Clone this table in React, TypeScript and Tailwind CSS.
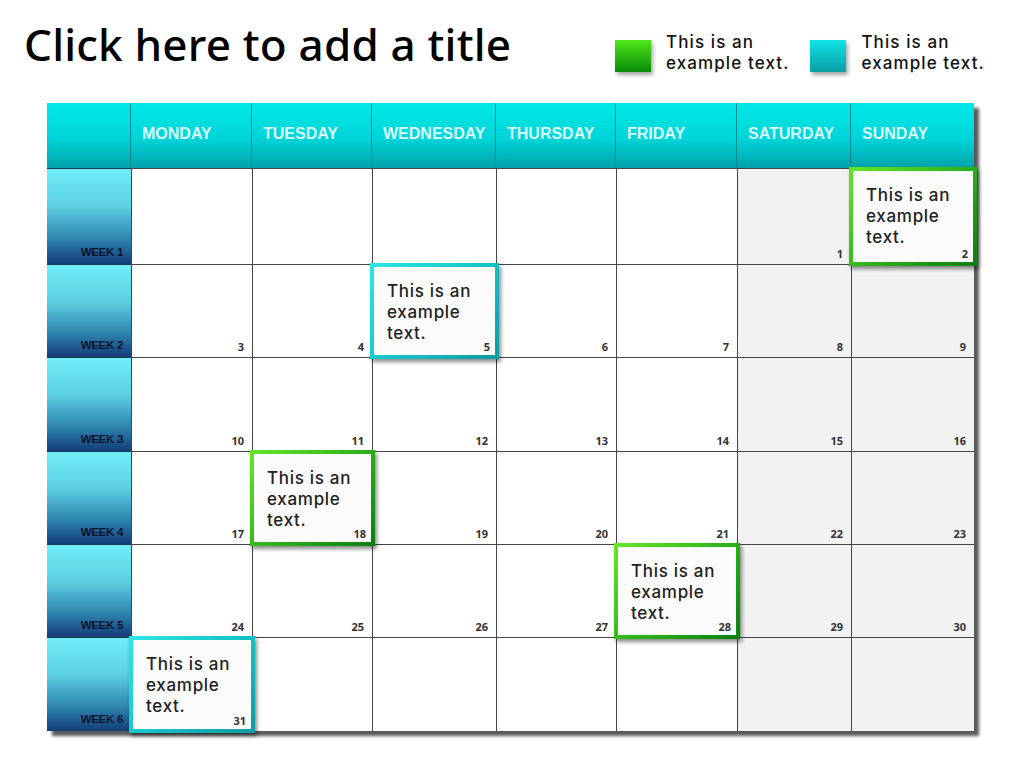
import React from "react";

const cols = [121, 120, 124, 120, 121, 114, 123];
const days = ["MONDAY", "TUESDAY", "WEDNESDAY", "THURSDAY", "FRIDAY", "SATURDAY", "SUNDAY"];
const rowH = [96, 93, 94, 93, 93, 94];

const weeks: (number | null)[][] = [
  [null, null, null, null, null, 1, 2],
  [3, 4, 5, 6, 7, 8, 9],
  [10, 11, 12, 13, 14, 15, 16],
  [17, 18, 19, 20, 21, 22, 23],
  [24, 25, 26, 27, 28, 29, 30],
  [31, null, null, null, null, null, null],
];

const highlights: Record<string, "green" | "cyan"> = {
  "0-6": "green",
  "1-2": "cyan",
  "3-1": "green",
  "4-4": "green",
  "5-0": "cyan",
};

function Highlight({ color, num }: { color: "green" | "cyan"; num: number | null }) {
  const grad =
    color === "green"
      ? "bg-[linear-gradient(135deg,#66e62a_0%,#2fb51a_50%,#0b7d10_100%)]"
      : "bg-[linear-gradient(135deg,#2ee6e6_0%,#17c4c8_50%,#0e9aa2_100%)]";
  return (
    <div
      className={`absolute -left-[3px] -right-[3px] -top-[2px] -bottom-[2px] z-10 p-[4px] shadow-[2px_3px_4px_rgba(0,0,0,0.45)] ${grad}`}
    >
      <div className="relative h-full w-full bg-[#fbfbfb]">
        <div
          className="absolute left-[13px] top-[14px] text-[17px] leading-[21px] font-medium text-[#222] tracking-[0.7px]"
          style={{ fontFamily: 'Inter, "Noto Sans", sans-serif' }}
        >
          This is an
          <br />
          example
          <br />
          text.
        </div>
        {num !== null && (
          <div className="absolute right-[5px] bottom-[1px] text-[11px] leading-[14px] font-bold text-[#333]">{num}</div>
        )}
      </div>
    </div>
  );
}

function Legend({ grad, gap }: { grad: string; gap: string }) {
  return (
    <div className="flex">
      <div className={`mt-[8px] ${gap} w-[36px] h-[32px] ${grad} shadow-[2px_3px_4px_rgba(0,0,0,0.35)]`} />
      <div
        className="ml-[15px] text-[17px] leading-[21px] font-medium text-[#111] tracking-[1.1px] whitespace-nowrap"
        style={{ fontFamily: 'Inter, "Noto Sans", sans-serif' }}
      >
        This is an
        <br />
        example text.
      </div>
    </div>
  );
}

export default function App() {
  return (
    <div
      className="w-[1024px] h-[768px] bg-white relative overflow-hidden"
      style={{ fontFamily: '"Noto Sans", "Open Sans", sans-serif' }}
    >
      {/* Header */}
      <div className="flex h-[103px]">
        <div className="pl-[24px] pt-[15px] text-[44px] leading-[58px] font-medium text-black tracking-[0.2px] w-[590px] whitespace-nowrap">
          Click here to add a title
        </div>
        <div className="flex pt-[32px]">
          <Legend grad="bg-[linear-gradient(180deg,#4ee81a,#0a8a0a)]" gap="ml-[25px]" />
          <Legend grad="bg-[linear-gradient(180deg,#10e4e8,#0a9ea6)]" gap="ml-[21px]" />
        </div>
      </div>

      {/* Calendar */}
      <div className="ml-[47px] w-[927px] shadow-[5px_5px_3px_rgba(60,60,60,0.85)]">
        <div
          className="grid"
          style={{ gridTemplateColumns: `84px ${cols.map((c) => c + "px").join(" ")}` }}
        >
          <div className="h-[65px] bg-[linear-gradient(180deg,#00e8e8_0%,#00d4d8_55%,#00a2aa_100%)] border-r border-[#0b8c92]" />
          {days.map((d, i) => (
            <div
              key={d}
              className={`h-[65px] bg-[linear-gradient(180deg,#00e8e8_0%,#00d4d8_55%,#00a2aa_100%)] ${
                i < 6 ? "border-r border-[#0b8c92]" : ""
              } pl-[11px] pt-[20px] text-[16px] leading-[22px] font-bold text-[#d9ffff] whitespace-nowrap`}
              style={{ fontFamily: '"Liberation Sans", Arial, sans-serif' }}
            >
              {d}
            </div>
          ))}

          {weeks.map((week, r) => (
            <React.Fragment key={r}>
              <div
                className="relative bg-[linear-gradient(180deg,#70eef8_0%,#5ccfe2_40%,#2c82ac_75%,#153c78_100%)] border-t border-[#1a3a5a]"
                style={{ height: rowH[r] }}
              >
                <div
                  className="absolute right-[8px] bottom-[3px] text-[11.5px] font-bold text-[#06122e] tracking-[-0.3px]"
                  style={{ fontFamily: '"Liberation Sans", Arial, sans-serif' }}
                >
                  WEEK {r + 1}
                </div>
              </div>
              {week.map((n, c) => {
                const hl = highlights[`${r}-${c}`];
                const weekend = c >= 5;
                return (
                  <div
                    key={c}
                    className={`relative border-t border-l border-[#444] ${weekend ? "bg-[#f2f2f2]" : "bg-white"}`}
                    style={{ height: rowH[r] }}
                  >
                    {n !== null && !hl && (
                      <div className="absolute right-[8px] bottom-[2px] text-[11px] font-bold text-[#333]">
                        {n}
                      </div>
                    )}
                    {hl && <Highlight color={hl} num={n} />}
                  </div>
                );
              })}
            </React.Fragment>
          ))}
        </div>
      </div>
    </div>
  );
}
